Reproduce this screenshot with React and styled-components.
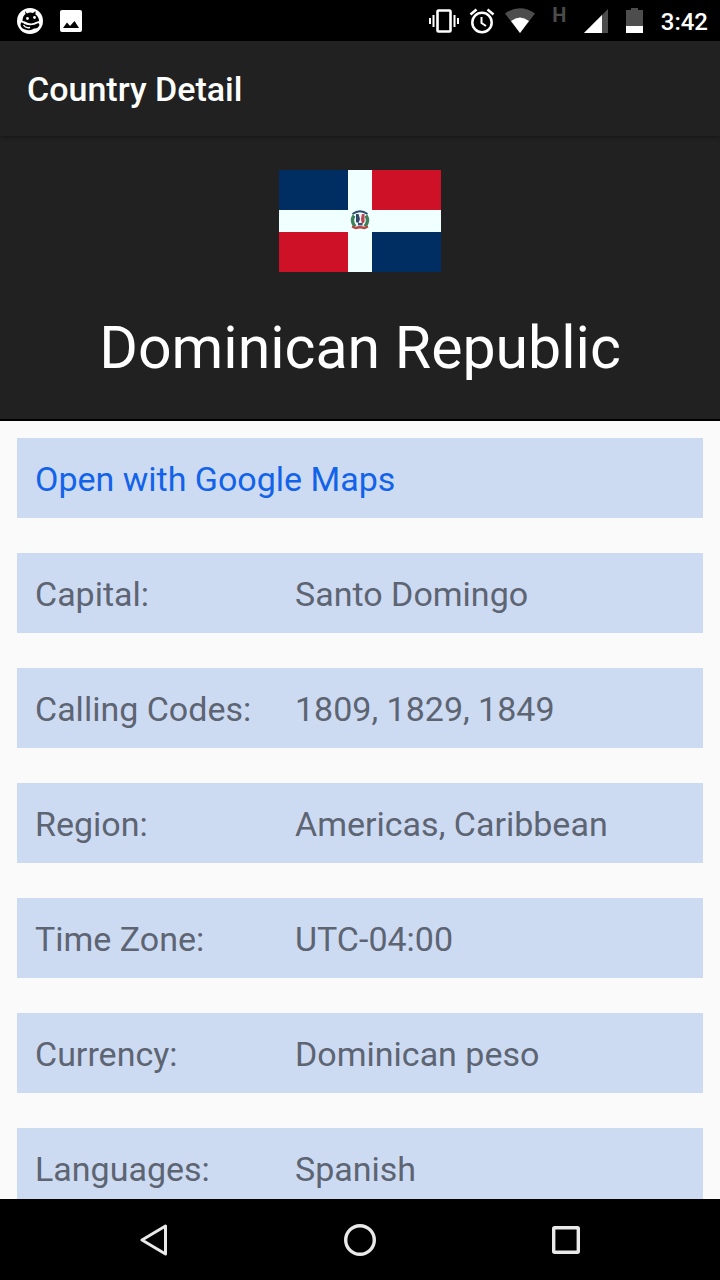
import React from "react";
import styled, { createGlobalStyle } from "styled-components";

const GlobalStyle = createGlobalStyle`
  *, *::before, *::after { box-sizing: border-box; }
  body {
    margin: 0;
    background: #fafafa;
    font-family: Roboto, "Liberation Sans", sans-serif;
  }
`;

const Screen = styled.div`
  display: flex;
  flex-direction: column;
  height: 100vh;
`;

const StatusBar = styled.div`
  display: flex;
  flex: none;
  align-items: center;
  justify-content: space-between;
  height: 41px;
  padding: 0 12px 0 17px;
  background: #000;
  color: #fff;
`;

const StatusGroup = styled.div`
  display: flex;
  align-items: center;
  gap: ${({ $gap }) => $gap}px;

  svg { display: block; }
`;

const NetworkType = styled.span`
  width: 29px;
  padding-bottom: 12px;
  color: #4b4b4b;
  font-size: 20px;
  font-weight: 700;
  line-height: 20px;
  text-align: center;
`;

const BatterySlot = styled.span`
  display: flex;
  justify-content: center;
  width: 33px;
`;

const Clock = styled.time`
  padding-top: 2px;
  font-size: 24px;
  font-weight: 500;
  line-height: 28px;
`;

const AppBar = styled.header`
  display: flex;
  flex: none;
  align-items: center;
  height: 95px;
  padding: 0 27px;
  background: #212121;
  box-shadow: 0 1px 4px rgba(0, 0, 0, 0.4);
  z-index: 1;
`;

const AppTitle = styled.h1`
  margin: 0;
  color: #fff;
  font-size: 34px;
  font-weight: 500;
  line-height: 40px;
`;

const Content = styled.main`
  flex: 1;
  min-height: 0;
  overflow-y: auto;
  scrollbar-width: none;
`;

const Hero = styled.section`
  display: flex;
  flex-direction: column;
  align-items: center;
  gap: 40px;
  padding: 34px 16px 35px;
  background: #212121;
  border-bottom: 2px solid #000;

  svg { display: block; }
`;

const CountryName = styled.h2`
  margin: 0;
  color: #fff;
  font-size: 59px;
  font-weight: 400;
  line-height: 72px;
  text-align: center;
`;

const Details = styled.div`
  display: flex;
  flex-direction: column;
  gap: 35px;
  padding: 17px;
`;

const DetailList = styled.dl`
  display: flex;
  flex-direction: column;
  gap: 35px;
  margin: 0;
`;

const Card = styled.div`
  display: flex;
  align-items: center;
  min-height: 80px;
  padding: 2px 18px 0;
  background: #cddbf2;
  color: #5d6472;
  font-size: 34px;
  line-height: 40px;
`;

const Label = styled.dt`
  flex: none;
  width: 260px;
`;

const Value = styled.dd`
  flex: 1;
  margin: 0;
`;

const MapLink = styled.a`
  color: #1263ea;
  text-decoration: none;
`;

const NavBar = styled.nav`
  display: flex;
  flex: none;
  height: 81px;
  padding: 0 7%;
  background: #000;
`;

const NavButton = styled.button`
  display: flex;
  flex: 1;
  align-items: center;
  justify-content: center;
  padding: 0;
  border: 0;
  background: transparent;
  color: #e9e9e9;
  cursor: pointer;
`;

const MascotIcon = () => (
  <svg width="26" height="28" viewBox="0 0 26 28" aria-hidden="true">
    <circle cx="13" cy="14" r="13" fill="#fff" />
    <path d="M8 4L10 6.500Q13 5 16 6L18.500 4L18.500 7.500Q22 10 22 14L19 15Q14 18 8 14.500L5.500 14Q5.500 9 8.500 7Z" fill="#000" />
    <path d="M4 15.500Q6 15 7.500 17Q14 20 21.500 16L22.500 18Q21 22 17 21.500Q14 24 10 23Q4 22 3.500 18Z" fill="#000" />
    <circle cx="10.500" cy="11.500" r="1.400" fill="#fff" />
    <circle cx="17.500" cy="10.500" r="1.400" fill="#fff" />
    <path d="M6.500 18Q8.500 21.500 13 20.500" fill="none" stroke="#fff" strokeWidth="1.300" />
  </svg>
);

const PictureIcon = () => (
  <svg width="22" height="22" viewBox="0 0 22 22" aria-hidden="true">
    <rect width="22" height="22" rx="2" fill="#fff" />
    <path d="M3 18L7 12.500L10 16L14.500 11L19 18Z" fill="#000" />
  </svg>
);

const VibrateIcon = () => (
  <svg width="30" height="24" viewBox="0 0 30 24" fill="none" stroke="#fff" aria-hidden="true">
    <rect x="8.500" y="1.500" width="13" height="21" rx="1" strokeWidth="2.600" />
    <path d="M1 9V15M4.500 6V18M25.500 6V18M29 9V15" strokeWidth="2" />
  </svg>
);

const AlarmIcon = () => (
  <svg width="26" height="26" viewBox="0 0 26 26" fill="none" stroke="#fff" aria-hidden="true">
    <circle cx="13" cy="14.500" r="9.700" strokeWidth="2.500" />
    <path d="M1.500 6.500L7.500 1.500M24.500 6.500L18.500 1.500" strokeWidth="2.500" />
    <path d="M12.500 9V15L17 18" strokeWidth="2" />
  </svg>
);

const WifiIcon = () => (
  <svg width="30" height="25" viewBox="0 0 30 25" aria-hidden="true">
    <path d="M0 5.500Q15 -5 30 5.500L15 25Z" fill="#4d4d4d" />
    <path d="M6 13Q15 6 24 13L15 25Z" fill="#fff" />
  </svg>
);

const SignalIcon = () => (
  <svg width="24" height="24" viewBox="0 0 24 24" aria-hidden="true">
    <path d="M24 0V24H0Z" fill="#4d4d4d" />
    <path d="M18 6V24H0Z" fill="#fff" />
  </svg>
);

const BatteryIcon = () => (
  <svg width="17" height="25" viewBox="0 0 17 25" aria-hidden="true">
    <path d="M5 0H12V2H17V18H0V2H5Z" fill="#4d4d4d" />
    <path d="M0 18H17V25H0Z" fill="#fff" />
  </svg>
);

const Flag = () => (
  <svg width="162" height="102" viewBox="0 0 162 102" role="img" aria-label="Flag of the Dominican Republic">
    <rect width="162" height="102" fill="#f0ffff" />
    <path d="M0 0H69V40H0ZM93 62H162V102H93Z" fill="#002d62" />
    <path d="M93 0H162V40H93ZM0 62H69V102H0Z" fill="#ce1126" />
    <path d="M73.500 44Q81 38.500 88.500 44" fill="none" stroke="#2b4c6c" strokeWidth="2" />
    <path d="M75 45.500Q71.500 51 76 56.500M87 45.500Q90.500 51 86 56.500" fill="none" stroke="#3f8058" strokeWidth="3.400" />
    <path d="M77 44H85.500V53Q84.500 56 81 56.500Q78 56 77 53Z" fill="#f1eeee" />
    <path d="M77 44H79.500L81 49L79.500 53L77 52Z" fill="#30476e" />
    <path d="M83 44H85.500V52L83 54L82 49Z" fill="#b84450" />
    <path d="M79 53H83.500V55.500H79Z" fill="#40547a" />
    <path d="M73 56.500L76.500 58Q81 56.500 85.500 58L89 56.500" fill="none" stroke="#b84440" strokeWidth="2.400" />
  </svg>
);

const BackIcon = () => (
  <svg width="28" height="32" viewBox="0 0 28 32" fill="none" stroke="currentColor" aria-hidden="true">
    <path d="M25.500 2V30L2 16Z" strokeWidth="3" strokeLinejoin="round" />
  </svg>
);

const HomeIcon = () => (
  <svg width="32" height="32" viewBox="0 0 32 32" fill="none" stroke="currentColor" aria-hidden="true">
    <circle cx="16" cy="16" r="14.300" strokeWidth="3.400" />
  </svg>
);

const RecentsIcon = () => (
  <svg width="28" height="28" viewBox="0 0 28 28" fill="none" stroke="currentColor" aria-hidden="true">
    <rect x="1.700" y="1.700" width="24.600" height="24.600" rx="1" strokeWidth="3.400" />
  </svg>
);

const details = [
  ["Capital:", "Santo Domingo"],
  ["Calling Codes:", "1809, 1829, 1849"],
  ["Region:", "Americas, Caribbean"],
  ["Time Zone:", "UTC-04:00"],
  ["Currency:", "Dominican peso"],
  ["Languages:", "Spanish"],
];

export default function App() {
  return (
    <>
      <GlobalStyle />
      <Screen>
        <StatusBar>
          <StatusGroup $gap={17}>
            <MascotIcon />
            <PictureIcon />
          </StatusGroup>
          <StatusGroup $gap={10}>
            <VibrateIcon />
            <AlarmIcon />
            <WifiIcon />
            <NetworkType>H</NetworkType>
            <SignalIcon />
            <BatterySlot>
              <BatteryIcon />
            </BatterySlot>
            <Clock>3:42</Clock>
          </StatusGroup>
        </StatusBar>
        <AppBar>
          <AppTitle>Country Detail</AppTitle>
        </AppBar>
        <Content>
          <Hero>
            <Flag />
            <CountryName>Dominican Republic</CountryName>
          </Hero>
          <Details>
            <Card>
              <MapLink href="#map">Open with Google Maps</MapLink>
            </Card>
            <DetailList>
              {details.map(([label, value]) => (
                <Card key={label}>
                  <Label>{label}</Label>
                  <Value>{value}</Value>
                </Card>
              ))}
            </DetailList>
          </Details>
        </Content>
        <NavBar aria-label="System navigation">
          <NavButton type="button" aria-label="Back">
            <BackIcon />
          </NavButton>
          <NavButton type="button" aria-label="Home">
            <HomeIcon />
          </NavButton>
          <NavButton type="button" aria-label="Recent apps">
            <RecentsIcon />
          </NavButton>
        </NavBar>
      </Screen>
    </>
  );
}
